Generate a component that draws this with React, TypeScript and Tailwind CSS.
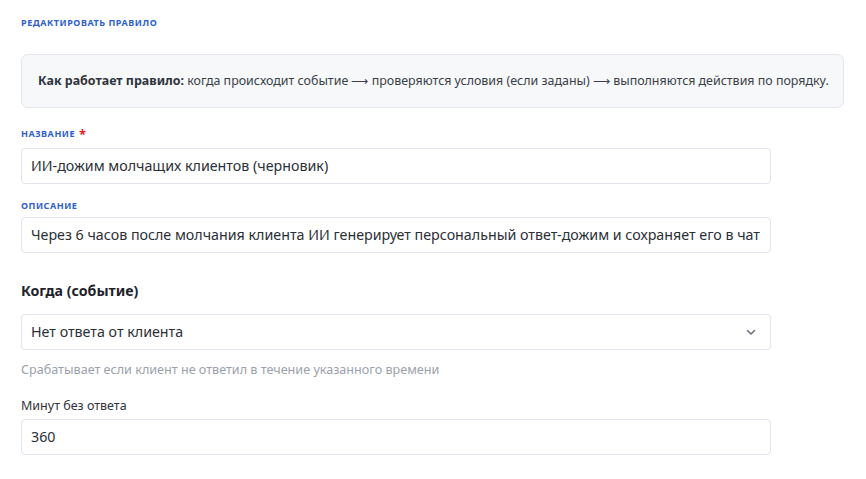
import React from "react";

const font = { fontFamily: '"Noto Sans", "Open Sans", sans-serif' };

function Label({ children, required }: { children: React.ReactNode; required?: boolean }) {
  return (
    <div className="flex items-center gap-1 text-[9px] font-bold uppercase tracking-[0.06em] text-[#2f5fd0] leading-[12px]">
      <span>{children}</span>
      {required && <span className="text-[13px] leading-[12px] text-[#e11d2a]">*</span>}
    </div>
  );
}

function Field({ value }: { value: string }) {
  return (
    <div className="flex h-[36px] w-[750px] items-center overflow-hidden whitespace-nowrap rounded-[4px] border border-[#dfe4ee] bg-white px-[9px] text-[14.25px] text-[#2b2f36]">
      <span className="whitespace-nowrap">{value}</span>
    </div>
  );
}

export default function App() {
  return (
    <div className="min-h-[479px] w-[866px] bg-white px-[21px] pt-[17px]" style={font}>
      <div className="text-[9px] font-bold uppercase tracking-[0.06em] text-[#2f5fd0] leading-[12px]">
        Редактировать правило
      </div>
      <div className="mt-[25px] flex h-[54px] w-[823px] items-center overflow-hidden whitespace-nowrap rounded-[7px] border border-[#e3e6ec] bg-[#f7f8fa] px-[16px] text-[12.45px] text-[#3a3f47]">
        <span className="whitespace-nowrap">
          <b className="font-bold text-[#2f343c]">Как работает правило:</b> когда происходит событие ⟶ проверяются условия (если заданы) ⟶ выполняются действия по порядку.
        </span>
      </div>
      <div className="mt-[20px]">
        <Label required>Название</Label>
      </div>
      <div className="mt-[8px]">
        <Field value="ИИ-дожим молчащих клиентов (черновик)" />
      </div>
      <div className="mt-[16px]">
        <Label>Описание</Label>
      </div>
      <div className="mt-[5px]">
        <Field value="Через 6 часов после молчания клиента ИИ генерирует персональный ответ-дожим и сохраняет его в чат" />
      </div>
      <div className="mt-[28px] text-[14.2px] font-bold leading-[20px] text-[#1f2329]">Когда (событие)</div>
      <div className="mt-[13px] flex h-[36px] w-[750px] items-center justify-between rounded-[4px] border border-[#dfe4ee] bg-white px-[9px] text-[14.25px] text-[#2b2f36]">
        <span>Нет ответа от клиента</span>
        <svg width="12" height="12" viewBox="0 0 12 12" className="mr-[4px]">
          <path d="M2.5 4.5 L6 8 L9.5 4.5" fill="none" stroke="#6b7280" strokeWidth="1.6" strokeLinecap="round" strokeLinejoin="round" />
        </svg>
      </div>
      <div className="mt-[12px] text-[12.6px] leading-[16px] text-[#9aa1ad]">
        Срабатывает если клиент не ответил в течение указанного времени
      </div>
      <div className="mt-[20px] text-[12.5px] leading-[16px] text-[#2f343c]">Минут без ответа</div>
      <div className="mt-[5px]">
        <Field value="360" />
      </div>
    </div>
  );
}
